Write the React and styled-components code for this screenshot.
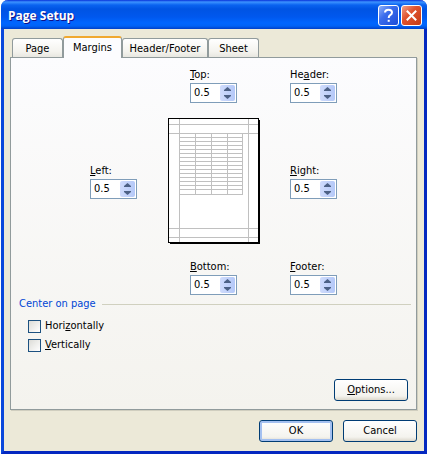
import React, { useState } from "react";
import styled, { createGlobalStyle, css } from "styled-components";

const MARGIN_FIELDS = [
  { id: "top", area: "top", label: [<u key="k">T</u>, "op:"] },
  { id: "header", area: "header", label: ["He", <u key="k">a</u>, "der:"] },
  { id: "left", area: "left", label: [<u key="k">L</u>, "eft:"] },
  { id: "right", area: "right", label: [<u key="k">R</u>, "ight:"] },
  { id: "bottom", area: "bottom", label: [<u key="k">B</u>, "ottom:"] },
  { id: "footer", area: "footer", label: [<u key="k">F</u>, "ooter:"] },
];

const TABS = [
  { name: "Page", width: 51 },
  { name: "Margins", width: 59 },
  { name: "Header/Footer", width: 86 },
  { name: "Sheet", width: 51 },
];

const Spinner = ({ id, area, label }) => {
  const [value, setValue] = useState("0.5");

  const step = (amount) =>
    setValue(String(Math.max(0, (parseFloat(value) || 0) + amount)));

  return (
    <Field $area={area}>
      <label htmlFor={id}>{label}</label>
      <SpinBox>
        <SpinInput
          id={id}
          value={value}
          onChange={(e) => setValue(e.target.value)}
        />
        <SpinButtons>
          <SpinButton aria-label="Increase" onClick={() => step(0.25)}>
            <svg width="7" height="4" viewBox="0 0 7 4">
              <path d="M0 4V3L3.5 0L7 3V4Z" />
            </svg>
          </SpinButton>
          <SpinButton aria-label="Decrease" onClick={() => step(-0.25)}>
            <svg width="7" height="4" viewBox="0 0 7 4">
              <path d="M0 0V1L3.5 4L7 1V0Z" />
            </svg>
          </SpinButton>
        </SpinButtons>
      </SpinBox>
    </Field>
  );
};

const PagePreview = () => {
  const rows = Array.from({ length: 14 }, (_, i) => 19 + i * 4);

  return (
    <Preview width="92" height="126" viewBox="0 0 92 126">
      <rect x="2" y="2" width="90" height="124" fill="#000" />
      <rect x="0.5" y="0.5" width="90" height="124" fill="#fff" stroke="#000" />
      <g fill="#c0c0c0">
        {[11, 80].map((x) => (
          <rect key={x} x={x} y="1" width="1" height="123" />
        ))}
        {[6, 15, 110, 119].map((y) => (
          <rect key={y} x="1" y={y} width="89" height="1" />
        ))}
        {[27, 43, 59, 74].map((x) => (
          <rect key={x} x={x} y="15" width="1" height="62" />
        ))}
        {[...rows, 76].map((y) => (
          <rect key={y} x="11" y={y} width="64" height="1" />
        ))}
      </g>
    </Preview>
  );
};

export default function App() {
  const [active, setActive] = useState("Margins");

  return (
    <Page>
      <GlobalStyle />
      <Dialog role="dialog" aria-labelledby="dialog-title">
        <TitleBar>
          <Title id="dialog-title">Page Setup</Title>
          <CaptionButton aria-label="Help">
            <svg width="19" height="19" viewBox="0 0 19 19">
              <path d="M6 6.6Q6 3.8 9.5 3.8Q13 3.8 13 6.6Q13 8.2 11.2 9.2Q9.7 10 9.7 12" />
              <path d="M9.7 13.8V15.8" />
            </svg>
          </CaptionButton>
          <CaptionButton aria-label="Close" $close>
            <svg width="19" height="19" viewBox="0 0 19 19">
              <path d="M4.8 4.8L14.2 14.2M14.2 4.8L4.8 14.2" />
            </svg>
          </CaptionButton>
        </TitleBar>
        <Body>
          <TabList role="tablist">
            {TABS.map(({ name, width }) => (
              <Tab
                key={name}
                role="tab"
                aria-selected={name === active}
                $active={name === active}
                $width={width}
                onClick={() => setActive(name)}
              >
                {name}
              </Tab>
            ))}
          </TabList>
          <Panel role="tabpanel">
            <MarginGrid>
              {MARGIN_FIELDS.map((field) => (
                <Spinner key={field.id} {...field} />
              ))}
              <PagePreview />
            </MarginGrid>
            <GroupTitle>Center on page</GroupTitle>
            <CheckList>
              <CheckLabel>
                <Checkbox type="checkbox" />
                <span>
                  Hori<u>z</u>ontally
                </span>
              </CheckLabel>
              <CheckLabel>
                <Checkbox type="checkbox" />
                <span>
                  <u>V</u>ertically
                </span>
              </CheckLabel>
            </CheckList>
            <ButtonRow>
              <PushButton>
                <u>O</u>ptions...
              </PushButton>
            </ButtonRow>
          </Panel>
          <ButtonRow>
            <PushButton $primary>OK</PushButton>
            <PushButton>Cancel</PushButton>
          </ButtonRow>
        </Body>
      </Dialog>
    </Page>
  );
}

const GlobalStyle = createGlobalStyle`
  * {
    box-sizing: border-box;
  }

  body {
    margin: 0;
    background: #fff;
  }

  body, button, input {
    font-family: Tahoma, "DejaVu Sans Condensed", "DejaVu Sans", sans-serif;
    font-size: 11px;
    line-height: 16px;
    color: #000;
  }

  u {
    text-underline-offset: 1px;
    text-decoration-skip-ink: none;
  }
`;

const Page = styled.div`
  padding: 0 7px 8px 1px;
`;

const Dialog = styled.div`
  border: 3px solid;
  border-top: none;
  border-color: #0a48dc #0428c0 #0428c0 #0a48dc;
  border-radius: 7px 7px 0 0;
  background: #ece9d8;
`;

const TitleBar = styled.header`
  display: flex;
  align-items: center;
  gap: 2px;
  height: 29px;
  margin: 0 -3px;
  padding: 2px 5px 0 7px;
  border-radius: 7px 7px 0 0;
  background: linear-gradient(
    #0831d9 0,
    #3c92ff 2px,
    #0a63f0 5px,
    #0054e3 9px,
    #0058ee 17px,
    #0066ff 23px,
    #0062f6 26px,
    #0040c8 29px
  );
`;

const Title = styled.h1`
  flex: 1;
  margin: 0;
  font-family: "Trebuchet MS", "Open Sans", sans-serif;
  font-size: 12px;
  line-height: 18px;
  font-weight: 700;
  color: #fff;
  text-shadow: 1px 1px #0f1089;
`;

const CaptionButton = styled.button`
  display: flex;
  align-items: center;
  justify-content: center;
  width: 21px;
  height: 21px;
  padding: 0;
  border: 1px solid #fff;
  border-radius: 3px;
  background: ${({ $close }) =>
    $close
      ? "linear-gradient(135deg, #f0a08a, #e0532f 40%, #c63a14)"
      : "linear-gradient(135deg, #8fb0f8, #3a6cec 40%, #1c4cd8)"};

  svg {
    flex: none;
    fill: none;
    stroke: #fff;
    stroke-width: 2;
  }
`;

const Body = styled.div`
  padding: 7px 7px 9px 6px;
`;

const TabList = styled.div`
  display: flex;
  align-items: flex-end;
  padding-left: 2px;
`;

const Tab = styled.button`
  width: ${({ $width }) => $width}px;
  height: 19px;
  padding: 2px 0 0;
  border: 1px solid #919b9c;
  border-bottom: none;
  border-radius: 3px 3px 0 0;
  background: linear-gradient(#fff, #f4f3ee 70%, #e8e7e0);

  ${({ $active }) =>
    $active &&
    css`
      height: 22px;
      margin-bottom: -1px;
      padding: 0;
      border-top: 2px solid #f0a830;
      background: #fcfcfe;
    `}
`;

const Panel = styled.section`
  margin-bottom: 10px;
  padding: 9px 8px 8px;
  border: 1px solid #919b9c;
  box-shadow: 1px 1px #d0cebf;
  background: linear-gradient(#fcfcfe, #f4f3ee);
`;

const MarginGrid = styled.div`
  display: grid;
  grid-template-columns: repeat(3, 100px);
  grid-template-areas:
    ". top header"
    "left preview right"
    ". bottom footer";
  justify-content: center;
  justify-items: center;
  align-items: center;
  row-gap: 15px;
`;

const Field = styled.div`
  grid-area: ${({ $area }) => $area};
  display: flex;
  flex-direction: column;
  width: 47px;
`;

const SpinBox = styled.div`
  display: flex;
  height: 20px;
  padding: 1px;
  border: 1px solid #7f9db9;
  background: #fff;
`;

const SpinInput = styled.input`
  flex: 1;
  min-width: 0;
  padding: 0 2px;
  border: none;
  outline: none;
  background: none;
`;

const SpinButtons = styled.div`
  display: flex;
  flex-direction: column;
  width: 15px;
  border-radius: 2px;
  background: linear-gradient(90deg, #d0dcfc, #b4c8f8);
`;

const SpinButton = styled.button`
  display: flex;
  flex: 1;
  align-items: center;
  justify-content: center;
  padding: 0;
  border: none;
  background: none;

  svg {
    fill: #4d6185;
  }
`;

const Preview = styled.svg`
  grid-area: preview;
  display: block;
`;

const GroupTitle = styled.h2`
  display: flex;
  align-items: center;
  gap: 6px;
  margin: 1px -3px 6px 0;
  font-size: 11px;
  line-height: 16px;
  font-weight: 400;
  color: #0046d5;

  &::after {
    content: "";
    flex: 1;
    height: 1px;
    background: #d0d0bf;
  }
`;

const CheckList = styled.div`
  display: flex;
  flex-direction: column;
  align-items: flex-start;
  gap: 3px;
  margin: 0 0 26px 9px;
`;

const CheckLabel = styled.label`
  display: flex;
  align-items: center;
  gap: 4px;
`;

const Checkbox = styled.input`
  appearance: none;
  width: 13px;
  height: 13px;
  margin: 0;
  border: 1px solid #1c5180;
  background: linear-gradient(135deg, #dcdcd7, #fff);

  &:checked {
    background: #21a121;
  }
`;

const ButtonRow = styled.div`
  display: flex;
  justify-content: flex-end;
  gap: 10px;
`;

const PushButton = styled.button`
  width: 74px;
  height: 22px;
  padding: 0;
  border: 1px solid #003c74;
  border-radius: 3px;
  background: linear-gradient(#fff, #f4f3ee 80%, #dcd8cc);
  box-shadow: ${({ $primary }) =>
    $primary ? "inset 0 0 0 2px #a4c0f0" : "none"};
`;
